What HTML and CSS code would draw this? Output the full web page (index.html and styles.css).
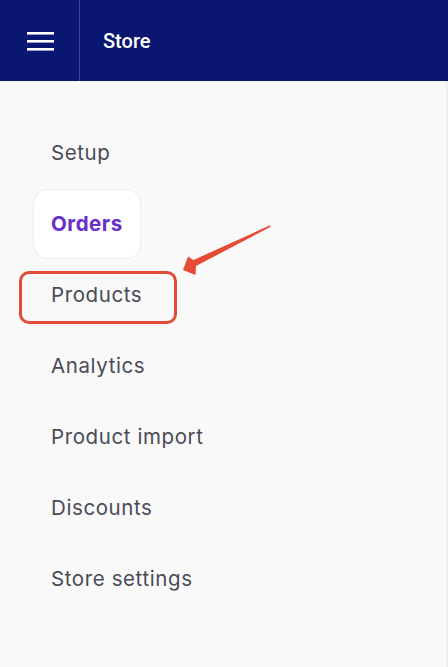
FILE: index.html
```html
<!DOCTYPE html>
<html>
<head>
<meta charset="utf-8">
<link rel="stylesheet" href="styles.css">
</head>
<body>
<header class="topbar">
  <div class="menu-cell">
    <svg class="hamburger" width="27" height="19" viewBox="0 0 27 19">
      <rect x="0" y="0" width="27" height="2.6" fill="#fff"/>
      <rect x="0" y="8" width="27" height="2.6" fill="#fff"/>
      <rect x="0" y="16" width="27" height="2.6" fill="#fff"/>
    </svg>
  </div>
  <div class="title">Store</div>
</header>
<nav class="side">
  <ul class="nav-list">
    <li class="nav-item"><span class="nav-link">Setup</span></li>
    <li class="nav-item"><span class="nav-link active">Orders</span></li>
    <li class="nav-item"><span class="nav-link">Products</span></li>
    <li class="nav-item"><span class="nav-link">Analytics</span></li>
    <li class="nav-item"><span class="nav-link">Product import</span></li>
    <li class="nav-item"><span class="nav-link">Discounts</span></li>
    <li class="nav-item"><span class="nav-link">Store settings</span></li>
  </ul>
  <div class="highlight"></div>
  <svg class="arrow" width="104" height="64" viewBox="0 0 104 64">
    <polygon points="13,55 18,41.5 23.5,45 100,10.3 100.6,11.8 26,51 25.5,60" fill="#e64b36"/>
  </svg>
</nav>
</body>
</html>
```
FILE: styles.css
```css
html, body {
  margin: 0;
  padding: 0;
}
body {
  width: 448px;
  height: 667px;
  overflow: hidden;
  background: #f9f9f9;
  font-family: "Inter", "Roboto", sans-serif;
}
.topbar {
  display: flex;
  height: 81px;
  background: #0a166f;
  color: #fff;
}
.menu-cell {
  width: 80px;
  border-right: 1px solid #3a4592;
  display: flex;
  align-items: center;
  justify-content: center;
  box-sizing: border-box;
  padding-left: 2px;
  padding-top: 2px;
}
.hamburger {
  display: block;
}
.title {
  display: flex;
  align-items: center;
  padding-left: 23px;
  font-family: "Roboto", sans-serif;
  font-weight: 500;
  font-size: 20px;
  padding-top: 1px;
}
.side {
  position: relative;
  height: 586px;
  border-right: 2px solid #eeeeee;
  box-sizing: border-box;
}
.nav-list {
  list-style: none;
  margin: 0;
  padding: 36px 0 0 33px;
}
.nav-item {
  height: 71px;
  display: flex;
  align-items: center;
}
.nav-link {
  display: flex;
  align-items: center;
  height: 70px;
  padding: 0 18px;
  box-sizing: border-box;
  font-size: 20.5px;
  color: #4b4b57;
  letter-spacing: 0.6px;
}
.nav-link.active {
  background: #ffffff;
  border: 1px solid #ececf0;
  border-radius: 14px;
  color: #6a2ecb;
  font-weight: 700;
  padding: 0 17px;
  letter-spacing: 0.5px;
}
.highlight {
  position: absolute;
  left: 19px;
  top: 190px;
  width: 158px;
  height: 53px;
  border: 3px solid #e24b37;
  border-radius: 10px;
  box-sizing: border-box;
}
.arrow {
  position: absolute;
  left: 170px;
  top: 134px;
}
```
